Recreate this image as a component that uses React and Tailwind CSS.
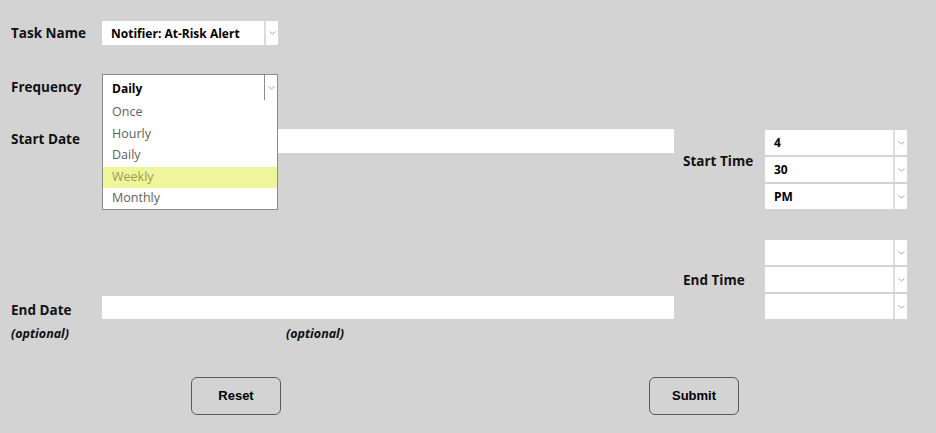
import React from 'react';

const Chevron = () => (
  <svg width="7" height="4" viewBox="0 0 7 4" className="block">
    <path d="M0.5 0.5 L3.5 3 L6.5 0.5" fill="none" stroke="#a8a8a8" strokeWidth="1" />
  </svg>
);

// plain white select box with the little arrow cell on the right
function SelectBox({ value, className = '', divider = 'border-[#dcdcdc]' }) {
  return (
    <div className={`flex bg-white ${className}`}>
      <div className="flex-1 flex items-center pl-[9px] pt-[1px] text-[12px] font-bold text-black">{value}</div>
      <div className={`w-[14px] flex items-center justify-center border-l-2 ${divider}`}>
        <Chevron />
      </div>
    </div>
  );
}

const options = ['Once', 'Hourly', 'Daily', 'Weekly', 'Monthly'];

export default function App() {
  return (
    <div className="relative w-[936px] h-[433px] bg-[#d3d3d3] font-['Open_Sans','Lato',sans-serif] text-[#111] overflow-hidden">
      {/* Task name */}
      <div className="flex items-center pt-[21px]">
        <div className="w-[102px] pl-[11px] text-[13.5px] font-bold">Task Name</div>
        <SelectBox value="Notifier: At-Risk Alert" className="w-[176px] h-[24px]" />
      </div>

      {/* Frequency */}
      <div className="flex items-center mt-[29px]">
        <div className="w-[102px] pl-[11px] text-[13.5px] font-bold">Frequency</div>
        <div className="flex bg-white w-[176px] h-[27px] border border-[#8c8c8c]">
          <div className="flex-1 flex items-center pl-[9px] pt-[2px] text-[12px] font-bold text-black">Daily</div>
          <div className="w-[13px] flex items-center justify-center border-l border-[#8c8c8c]">
            <Chevron />
          </div>
        </div>
      </div>

      {/* Dates and times */}
      <div className="flex mt-[28px]">
        <div className="w-[674px] flex flex-col">
          <div className="flex items-center">
            <div className="w-[102px] pl-[11px] text-[13.5px] font-bold -mt-[3px]">Start Date</div>
            <div className="w-[572px] h-[24px] bg-white" />
          </div>
          <div className="flex items-center mt-[142px]">
            <div className="w-[102px] pl-[11px] text-[13.5px] font-bold pt-[5px]">End Date</div>
            <div className="w-[572px] h-[23px] bg-white" />
          </div>
          <div className="flex mt-[5px] text-[12.5px] font-bold italic">
            <div className="w-[286px] pl-[11px]">(optional)</div>
            <div>(optional)</div>
          </div>
        </div>

        <div className="ml-[9px] flex flex-col">
          <div className="flex">
            <div className="w-[82px] text-[13.5px] font-bold pt-[22px]">Start Time</div>
            <div className="flex flex-col gap-[2px] pt-[1px]">
              <SelectBox value="4" className="w-[142px] h-[25px]" />
              <SelectBox value="30" className="w-[142px] h-[25px]" />
              <SelectBox value="PM" className="w-[142px] h-[25px]" />
            </div>
          </div>
          <div className="flex items-center mt-[31px]">
            <div className="w-[82px] text-[13.5px] font-bold pt-[2px]">End Time</div>
            <div className="flex flex-col gap-[2px]">
              <SelectBox value="" className="w-[142px] h-[25px]" />
              <SelectBox value="" className="w-[142px] h-[25px]" />
              <SelectBox value="" className="w-[142px] h-[25px]" />
            </div>
          </div>
        </div>
      </div>

      {/* Buttons */}
      <div className="flex mt-[33px] font-['Liberation_Sans',Arial,sans-serif]">
        <button className="ml-[191px] w-[90px] h-[38px] rounded-[6px] border border-[#5a5a5a] text-[13px] font-bold text-black">
          Reset
        </button>
        <button className="ml-[368px] w-[90px] h-[38px] rounded-[6px] border border-[#5a5a5a] text-[13px] font-bold text-black">
          Submit
        </button>
      </div>

      {/* Open frequency dropdown */}
      <div className="absolute left-[102px] top-[100px] w-[176px] h-[110px] bg-white border border-[#8c8c8c] border-t-0 pt-[2px]">
        {options.map((o) => (
          <div
            key={o}
            className={`h-[21.5px] flex items-center pl-[9px] text-[12.5px] ${
              o === 'Weekly' ? 'bg-[#eff59b] text-[#9a9a55]' : 'text-[#5f5f5f]'
            }`}
          >
            {o}
          </div>
        ))}
      </div>
    </div>
  );
}
